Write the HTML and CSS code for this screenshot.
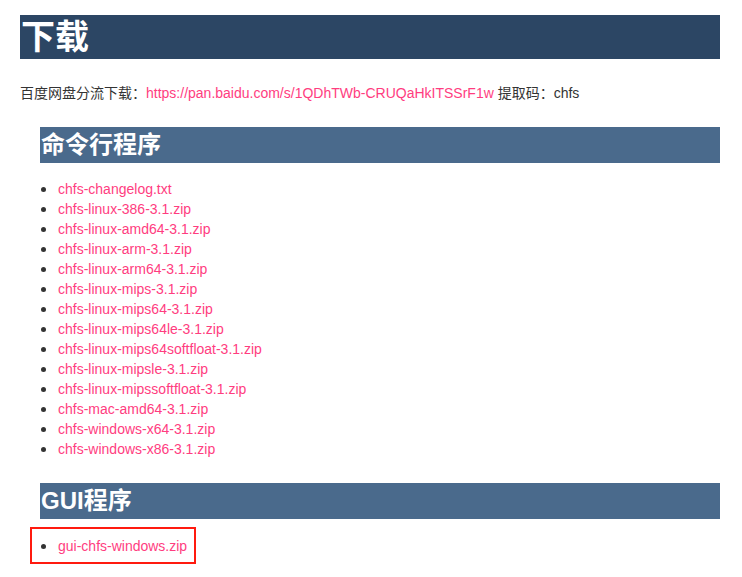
FILE: index.html
```html
<!DOCTYPE html>
<html lang="zh-CN">
<head>
    <meta charset="UTF-8">
    <title>下载</title>
    <link rel="stylesheet" href="styles.css">
</head>
<body>
    <h1>下载</h1>
    <p class="mirror">百度网盘分流下载：<a href="#">https://pan.baidu.com/s/1QDhTWb-CRUQaHkITSSrF1w</a> 提取码：chfs</p>

    <div class="section">
        <h2>命令行程序</h2>
        <ul class="files">
            <li><a href="#">chfs-changelog.txt</a></li>
            <li><a href="#">chfs-linux-386-3.1.zip</a></li>
            <li><a href="#">chfs-linux-amd64-3.1.zip</a></li>
            <li><a href="#">chfs-linux-arm-3.1.zip</a></li>
            <li><a href="#">chfs-linux-arm64-3.1.zip</a></li>
            <li><a href="#">chfs-linux-mips-3.1.zip</a></li>
            <li><a href="#">chfs-linux-mips64-3.1.zip</a></li>
            <li><a href="#">chfs-linux-mips64le-3.1.zip</a></li>
            <li><a href="#">chfs-linux-mips64softfloat-3.1.zip</a></li>
            <li><a href="#">chfs-linux-mipsle-3.1.zip</a></li>
            <li><a href="#">chfs-linux-mipssoftfloat-3.1.zip</a></li>
            <li><a href="#">chfs-mac-amd64-3.1.zip</a></li>
            <li><a href="#">chfs-windows-x64-3.1.zip</a></li>
            <li><a href="#">chfs-windows-x86-3.1.zip</a></li>
        </ul>
    </div>

    <div class="section">
        <h2>GUI程序</h2>
        <ul class="files marked">
            <li><a href="#">gui-chfs-windows.zip</a></li>
        </ul>
    </div>
</body>
</html>
```

FILE: styles.css
```css
* {
    box-sizing: border-box;
}

body {
    margin: 0;
    padding: 15px 22px 0 20px;
    font-family: 'Liberation Sans', Arial, 'Noto Sans CJK SC', sans-serif;
    font-size: 14px;
    color: #333;
    background: white;
}

a {
    color: #ff3d7f;
    text-decoration: none;
}

h1 {
    margin: 0;
    height: 44px;
    line-height: 44px;
    padding-left: 1px;
    background: #2c4664;
    color: white;
    font-family: 'Liberation Sans', 'Noto Sans CJK SC', sans-serif;
    font-size: 34px;
    font-weight: 700;
}

.mirror {
    margin: 24px 0 0;
    line-height: 20px;
}

.section {
    margin-left: 20px;
}

.section h2 {
    margin: 24px 0 0;
    height: 36px;
    line-height: 36px;
    padding-left: 1px;
    background: #4a6a8c;
    color: white;
    font-family: 'Liberation Sans', 'Noto Sans CJK SC', sans-serif;
    font-size: 24px;
    font-weight: 700;
}

.files {
    margin: 16px 0 0;
    padding: 0;
    list-style: none;
    line-height: 20px;
}

.files li {
    display: flex;
    align-items: center;
}

.files li::before {
    content: "";
    width: 5px;
    height: 5px;
    margin: 1px 12px 0 1px;
    border-radius: 50%;
    background: #333;
}

.files.marked {
    display: inline-block;
    margin: 8px 0 0 -10px;
    padding: 7px 7px 6px 8px;
    border: 2px solid #ff1a0f;
}
```
